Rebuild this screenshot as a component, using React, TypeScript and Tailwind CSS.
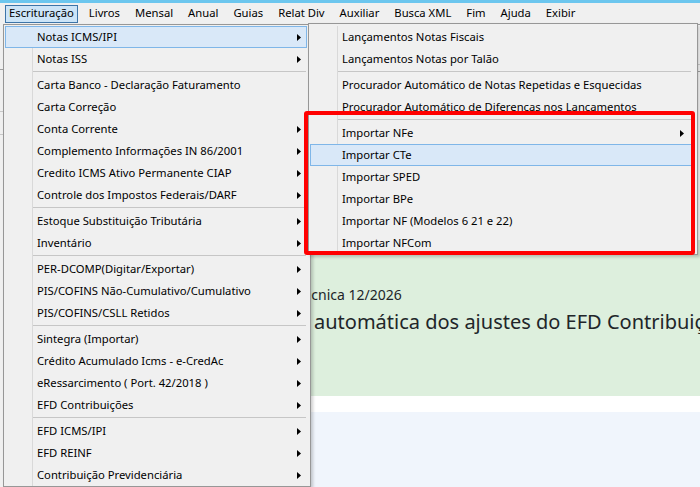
type Entry = { label: string; sub?: boolean; active?: boolean } | "sep";

const mainItems: Entry[] = [
   { label: "Notas ICMS/IPI", sub: true, active: true },
   { label: "Notas ISS", sub: true },
   "sep",
   { label: "Carta Banco - Declaração Faturamento" },
   { label: "Carta Correção" },
   { label: "Conta Corrente", sub: true },
   { label: "Complemento Informações IN 86/2001", sub: true },
   { label: "Credito ICMS Ativo Permanente CIAP", sub: true },
   { label: "Controle dos Impostos Federais/DARF", sub: true },
   "sep",
   { label: "Estoque Substituição Tributária", sub: true },
   { label: "Inventário", sub: true },
   "sep",
   { label: "PER-DCOMP(Digitar/Exportar)", sub: true },
   { label: "PIS/COFINS Não-Cumulativo/Cumulativo", sub: true },
   { label: "PIS/COFINS/CSLL Retidos", sub: true },
   "sep",
   { label: "Sintegra (Importar)", sub: true },
   { label: "Crédito Acumulado Icms - e-CredAc", sub: true },
   { label: "eRessarcimento ( Port. 42/2018 )", sub: true },
   { label: "EFD Contribuições", sub: true },
   "sep",
   { label: "EFD ICMS/IPI", sub: true },
   { label: "EFD REINF", sub: true },
   { label: "Contribuição Previdenciária", sub: true },
];

const notasItems: Entry[] = [
   { label: "Lançamentos Notas Fiscais" },
   { label: "Lançamentos Notas por Talão" },
   "sep",
   { label: "Procurador Automático de Notas Repetidas e Esquecidas" },
   { label: "Procurador Automático de Diferencas nos Lancamentos" },
   "sep",
   { label: "Importar NFe", sub: true },
   { label: "Importar CTe", active: true },
   { label: "Importar SPED" },
   { label: "Importar BPe" },
   { label: "Importar NF (Modelos 6 21 e 22)" },
   { label: "Importar NFCom" },
];

const barItems = ["Livros", "Mensal", "Anual", "Guias", "Relat Div", "Auxiliar", "Busca XML", "Fim", "Ajuda", "Exibir"];

function Arrow({ mr }: { mr: string }) {
   return (
      <svg width="4" height="7" viewBox="0 0 4 7" className={`ml-auto ${mr}`}>
         <path d="M0 0L4 3.5L0 7Z" fill="#000" />
      </svg>
   );
}

function MenuList({ items, arrowMr }: { items: Entry[]; arrowMr: string }) {
   return (
      <>
         {items.map((it, i) =>
            it === "sep" ? (
               <div key={i} className="flex h-[4px]">
                  <div className="w-[28px] border-r border-[#d9d9d9]" />
                  <div className="mt-px mr-px h-px flex-1 bg-[#c6c6c6]" />
               </div>
            ) : (
               <div
                  key={i}
                  className={`flex h-[22px] items-center ${it.active ? "bg-[#d9e8f8] shadow-[inset_0_0_0_1px_#7fb6e8]" : ""}`}
               >
                  <div className={`h-full w-[28px] border-r ${it.active ? "border-transparent" : "border-[#d9d9d9]"}`} />
                  <span className="pl-[4px] text-black">{it.label}</span>
                  {it.sub && <Arrow mr={arrowMr} />}
               </div>
            )
         )}
      </>
   );
}

export default function App() {
   return (
      <div className="relative h-[487px] w-[700px] overflow-hidden bg-white font-['Noto_Sans',sans-serif] text-[11.25px]">
         <div className="h-[3px] bg-[#6cc6ee]" />

         {/* menu bar */}
         <div className="flex h-[21px] items-center bg-[#f0f0f0] pl-[5px]">
            <div className="flex h-[18px] items-center border border-[#3c74a8] bg-[#cce4f7] px-[3px]">Escrituração</div>
            <div className="ml-[11px] flex gap-[15px]">
               {barItems.map((b) => (
                  <span key={b}>{b}</span>
               ))}
            </div>
         </div>

         {/* page underneath the menus */}
         <div className="flex h-[463px]">
            <div className="w-[200px] shrink-0 bg-[#f0f0f0]">
               <div className="h-[46px] border-b border-[#a0a0a0]" />
               <div className="h-[42px] border-b border-[#c8c8c8]" />
               <div className="h-[23px] border-b border-[#c8c8c8]" />
            </div>
            <div className="flex min-w-0 flex-1 flex-col overflow-hidden">
               <div className="h-[216px] border-t border-[#a0a0a0] bg-white">
                  <div className="h-[40px] border-b border-[#d4d4d4]" />
                  <div className="h-[7px] border-b border-[#a8a8a8]" />
               </div>
               <div className="h-[156px] bg-[#ddefdd] pt-[45px] text-[#212529]">
                  <p className="whitespace-nowrap pl-[61px] text-[14px] leading-[20px]">Nota Técnica 12/2026</p>
                  <p className="mt-[3px] whitespace-nowrap pl-[114px] text-[20px] leading-[28px]">
                     automática dos ajustes do EFD Contribuições
                  </p>
               </div>
               <div className="h-[16px] bg-white" />
               <div className="flex-1 bg-[#f0f5fc]" />
            </div>
         </div>

         {/* Escrituração dropdown */}
         <div className="absolute left-[3px] top-[24px] w-[308px] border border-[#979797] bg-[#f0f0f0] pl-px pr-[3px] pt-px shadow-[2px_2px_3px_rgba(0,0,0,0.2)]">
            <MenuList items={mainItems} arrowMr="mr-[6px]" />
         </div>

         {/* Notas ICMS/IPI submenu */}
         <div className="absolute left-[308px] top-[23px] w-[390px] border border-[#979797] bg-[#f0f0f0] pl-px pr-[5px] pt-[2px] shadow-[2px_2px_3px_rgba(0,0,0,0.2)]">
            <MenuList items={notasItems} arrowMr="mr-[8px]" />
         </div>

         {/* highlight frame */}
         <div className="absolute left-[304px] top-[111px] h-[144px] w-[391px] rounded-[3px] border-4 border-[#ff0000]" />
      </div>
   );
}
